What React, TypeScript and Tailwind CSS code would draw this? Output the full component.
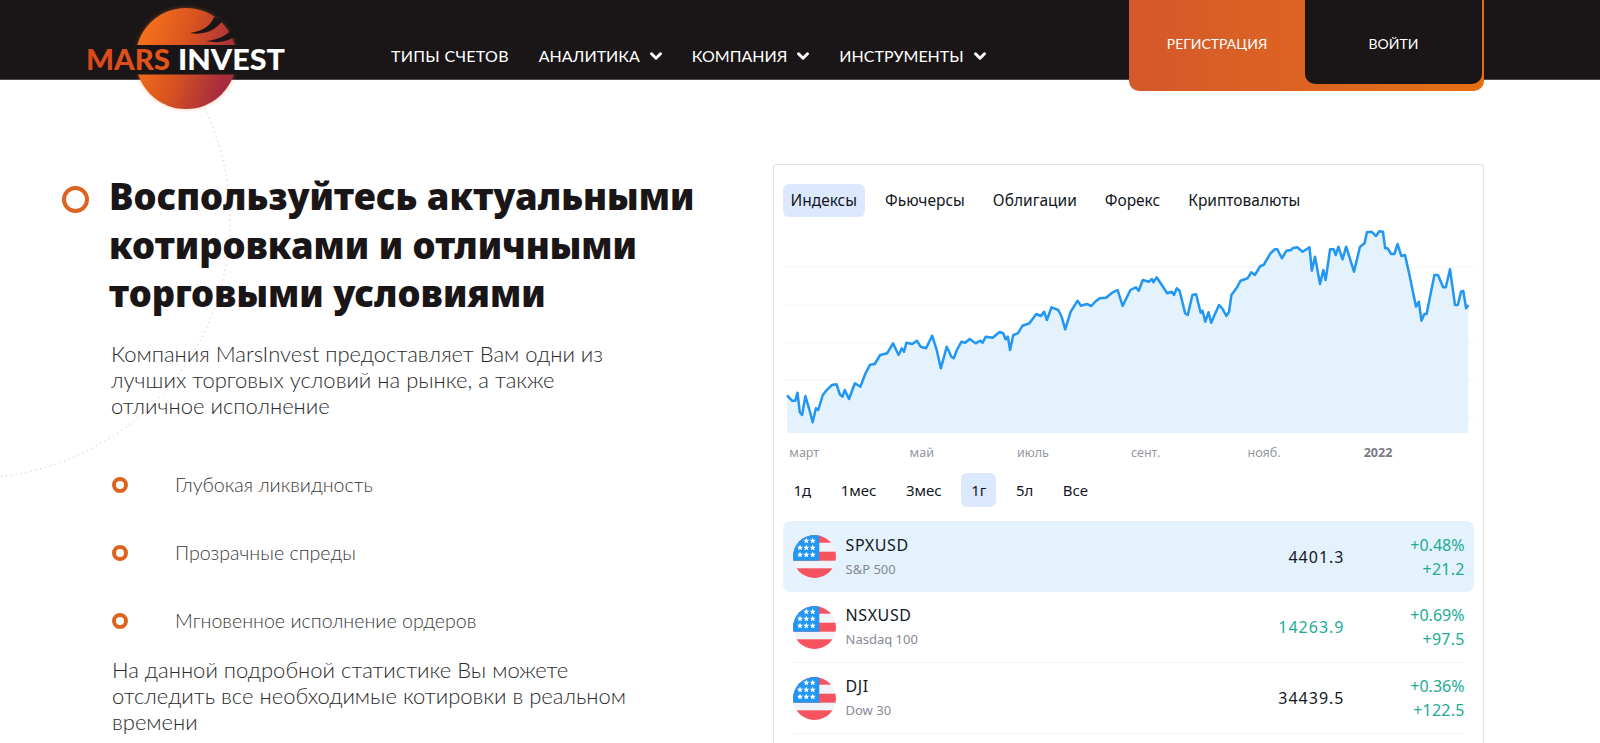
import { ChevronDown } from "lucide-react";

const navItems = [
  { label: "ТИПЫ СЧЕТОВ", arrow: false },
  { label: "АНАЛИТИКА", arrow: true },
  { label: "КОМПАНИЯ", arrow: true },
  { label: "ИНСТРУМЕНТЫ", arrow: true },
];

const tabs = ["Индексы", "Фьючерсы", "Облигации", "Форекс", "Криптовалюты"];
const ranges = ["1д", "1мес", "3мес", "1г", "5л", "Все"];
const bullets = ["Глубокая ликвидность", "Прозрачные спреды", "Мгновенное исполнение ордеров"];

const quotes = [
  { id: "spx", symbol: "SPXUSD", name: "S&P 500", price: "4401.3", up: false, pct: "+0.48%", diff: "+21.2" },
  { id: "nsx", symbol: "NSXUSD", name: "Nasdaq 100", price: "14263.9", up: true, pct: "+0.69%", diff: "+97.5" },
  { id: "dji", symbol: "DJI", name: "Dow 30", price: "34439.5", up: false, pct: "+0.36%", diff: "+122.5" },
];

const axisLabels = [
  { x: 6.3, text: "март" },
  { x: 126.6, text: "май" },
  { x: 234, text: "июль" },
  { x: 348, text: "сент." },
  { x: 464.5, text: "нояб." },
  { x: 580.7, text: "2022", bold: true },
];

// traced from the picture, x and y are in different scales, see toPath
const raw = [
  [37,706],[48,722],[55,722],[60,698],[65,757],[70,765],[77,708],[85,745],[93,787],[100,745],[105,750],[115,705],[125,688],[135,675],[145,673],[152,703],[158,710],[163,690],[172,717],[185,670],[197,680],[208,640],[218,614],[228,612],[240,585],[255,580],[268,550],[280,585],[287,565],[292,575],[297,548],[310,552],[320,542],[328,560],[340,565],[353,527],[363,570],[372,625],[385,560],[395,590],[400,595],[407,570],[417,545],[425,548],[435,537],[448,550],[458,542],[463,548],[470,530],[485,533],[500,516],[508,520],[513,538],[518,530],[523,570],[530,525],[540,520],[550,497],[565,490],[580,462],[590,468],[597,455],[603,480],[613,442],[628,450],[635,470],[643,508],[655,455],[670,422],[677,437],[690,432],[700,438],[708,425],[718,415],[732,413],[745,398],[757,390],[768,438],[785,390],[797,382],[803,392],[812,360],[825,365],[832,357],[835,367],[842,352],[850,368],[865,400],[875,395],[880,405],[886,385],[892,392],[904,460],[910,465],[920,405],[928,403],[938,458],[942,452],[948,485],[955,457],[961,488],[978,435],[985,445],[994,468],[1000,455],[1005,405],[1018,380],[1025,362],[1040,355],[1048,337],[1056,345],[1068,318],[1075,315],[1090,280],[1100,268],[1105,268],[1115,295],[1125,272],[1135,270],[1138,265],[1148,262],[1160,275],[1175,262],[1180,332],[1187,290],[1198,372],[1205,330],[1210,360],[1220,268],[1228,268],[1232,285],[1238,260],[1247,298],[1255,260],[1272,335],[1285,260],[1295,250],[1300,217],[1310,215],[1320,228],[1327,214],[1335,215],[1340,265],[1345,265],[1353,282],[1360,282],[1367,252],[1375,288],[1383,285],[1392,340],[1407,440],[1413,425],[1419,482],[1425,462],[1430,462],[1447,345],[1455,345],[1466,382],[1472,382],[1481,328],[1492,435],[1498,435],[1505,395],[1510,393],[1516,445],[1521,435],
];

const toX = (x: number) => x / 2.178 - 13;
const toPath = () => raw.map(([x, y]) => `${toX(x).toFixed(1)} ${(y / 3 - 57).toFixed(1)}`).join(" L");

const stars: [number, number][] = [
  [13.3, 5.7], [19.7, 5.7],
  [7, 12.7], [13.3, 12.7], [19.7, 12.7],
  [7, 19.7], [13.3, 19.7], [19.7, 19.7],
];

const Flag = () => (
  <svg width="43" height="43" viewBox="0 0 43 43" className="shrink-0">
    <defs>
      <clipPath id="flagClip">
        <circle cx="21.5" cy="21.5" r="21.5" />
      </clipPath>
    </defs>
    <g clipPath="url(#flagClip)">
      <rect width="43" height="43" fill="#f0f3fa" />
      <rect y="0" width="43" height="7.7" fill="#f7525f" />
      <rect y="16.7" width="43" height="9" fill="#f7525f" />
      <rect y="33.3" width="43" height="9.7" fill="#f7525f" />
      <rect width="26.3" height="25.7" fill="#2196f3" />
      {stars.map(([x, y]) => (
        <polygon
          key={`${x}-${y}`}
          transform={`translate(${x} ${y}) scale(1.2)`}
          points="0,-2.6 0.7,-0.8 2.5,-0.8 1.1,0.4 1.6,2.2 0,1.2 -1.6,2.2 -1.1,0.4 -2.5,-0.8 -0.7,-0.8"
          fill="#fff"
        />
      ))}
    </g>
  </svg>
);

const Logo = () => (
  <svg width="240" height="125" viewBox="0 0 240 125" className="absolute left-[70px] top-0">
    <defs>
      <linearGradient id="marsBall" x1="0" y1="0" x2="1" y2="0.35">
        <stop offset="0" stopColor="#ff7a1a" />
        <stop offset="0.55" stopColor="#d9541f" />
        <stop offset="1" stopColor="#a62c3e" />
      </linearGradient>
      <linearGradient id="marsWord" x1="0" y1="0" x2="1" y2="0">
        <stop offset="0" stopColor="#d9481c" />
        <stop offset="1" stopColor="#e2571a" />
      </linearGradient>
    </defs>
    <circle cx="116" cy="58.5" r="50.5" fill="url(#marsBall)" className="drop-shadow-[0_0_2px_rgba(255,120,40,0.4)]" />
    <path d="M120 33 C134 31 141 25 144 17 L153 20 C148 28 136 36 120 33Z" fill="#1a1617" />
    <path d="M136 41 C148 40 158 35 164 27 L170 33 C160 41 150 44 136 41Z" fill="#1a1617" />
    <rect x="50" y="45" width="140" height="29.5" fill="#1a1617" />
    <text x="16" y="70" fontFamily="Lato, sans-serif" fontWeight="900" fontSize="28" textLength="84" lengthAdjust="spacingAndGlyphs" fill="url(#marsWord)">
      MARS
    </text>
    <text x="108" y="70" fontFamily="Lato, sans-serif" fontWeight="900" fontSize="28" textLength="107" lengthAdjust="spacingAndGlyphs" fill="#fff">
      INVEST
    </text>
  </svg>
);

export default function App() {
  return (
    <div className="relative h-[743px] overflow-hidden bg-white font-['Lato',sans-serif] text-[#1a1617]">
      <header className="relative z-10 flex h-[80px] items-start border-b border-[#4a4a4a] bg-[#1a1617] pl-[391px] pr-[116px]">
        <Logo />
        <nav className="flex items-center gap-[30px] pt-[46px] text-[16px] leading-[20px] text-white">
          {navItems.map((item) => (
            <a key={item.label} className={item.arrow ? "flex items-center gap-[7px]" : "flex items-center tracking-[0.3px]"}>
              {item.label}
              {item.arrow && <ChevronDown size={18} strokeWidth={4} className="-mr-[3px]" />}
            </a>
          ))}
        </nav>
        <div className="ml-auto flex h-[91px] w-[355px] rounded-b-[10px] bg-gradient-to-r from-[#d4582b] to-[#e56f10] pb-[7px] pr-[2px] text-[14px] text-white">
          <a className="flex w-[176px] justify-center pt-[33px]">РЕГИСТРАЦИЯ</a>
          <a className="flex flex-1 justify-center rounded-b-[10px] bg-[#1a1617] pt-[33px]">ВОЙТИ</a>
        </div>
      </header>

      <svg width="300" height="500" className="absolute left-0 top-0">
        <circle cx="-28" cy="220" r="258" fill="none" stroke="#f4a585" strokeWidth="1" strokeDasharray="1 4" />
      </svg>

      <main className="relative flex items-start">
        <section className="w-[773px] pl-[62px] pt-[92px]">
          <div className="flex items-start gap-[20px]">
            <span className="mt-[14px] h-[27px] w-[27px] shrink-0 rounded-full border-[4px] border-[#dc6320]" />
            <h1 className="font-['Noto_Sans',sans-serif] text-[36.4px] font-black leading-[48.5px] text-[#1a1617]">
              Воспользуйтесь актуальными
              <br />
              котировками и отличными
              <br />
              торговыми условиями
            </h1>
          </div>
          <p className="ml-[49px] mt-[23px] w-[510px] text-[22px] font-light leading-[26px] text-[#2b2b2b]">
            Компания MarsInvest предоставляет Вам одни из лучших торговых условий на рынке, а также отличное исполнение
          </p>
          <ul className="ml-[50px] mt-[54.5px] flex flex-col gap-[44px]">
            {bullets.map((text) => (
              <li key={text} className="flex h-[24px] items-center text-[19.6px] font-light text-[#3a3a3a]">
                <span className="mr-[47px] h-[16px] w-[16px] shrink-0 rounded-full border-[4px] border-[#dc6320]" />
                {text}
              </li>
            ))}
          </ul>
          <p className="ml-[50px] mt-[24px] w-[530px] text-[22px] font-light leading-[26px] text-[#2b2b2b]">
            На данной подробной статистике Вы можете отследить все необходимые котировки в реальном времени
          </p>
        </section>

        <section className="mt-[84px] h-[700px] w-[711px] rounded-[3px] border border-[#e0e3eb] pl-[9px] pr-[9px] pt-[19px] font-['Noto_Sans',sans-serif] text-[#131722]">
          <div className="flex gap-[13px] text-[15.5px]">
            {tabs.map((tab, i) => (
              <span
                key={tab}
                className={
                  i === 0
                    ? "flex h-[33px] items-center rounded-[6px] bg-[#dbe8fd] px-[7.5px]"
                    : "flex h-[33px] items-center rounded-[6px] px-[7.5px]"
                }
              >
                {tab}
              </span>
            ))}
          </div>

          <svg width="691" height="256" className="block">
            {[50, 88, 126, 163, 200].map((y) => (
              <line key={y} x1="0" x2="691" y1={y} y2={y} stroke="#f3f5fa" />
            ))}
            <path d={`M${toPath()} L${toX(1521)} 216 L${toX(37)} 216 Z`} fill="#e3f2fd" />
            <path d={`M${toPath()}`} fill="none" stroke="#2196f3" strokeWidth="2.5" strokeLinejoin="round" />
            {axisLabels.map((l) => (
              <text
                key={l.text}
                x={l.x}
                y="240"
                fontSize="12.5"
                fontWeight={l.bold ? 700 : 400}
                fill={l.bold ? "#787b86" : "#9598a1"}
              >
                {l.text}
              </text>
            ))}
          </svg>

          <div className="ml-[0.5px] flex gap-[9.5px] text-[15px]">
            {ranges.map((r) => (
              <span
                key={r}
                className={
                  r === "1г"
                    ? "flex h-[33.5px] items-center rounded-[6px] bg-[#dbe8fd] px-[10px]"
                    : "flex h-[33.5px] items-center rounded-[6px] px-[10px]"
                }
              >
                {r}
              </span>
            ))}
          </div>

          <div className="mt-[14.5px] flex flex-col">
            {quotes.map((q, i) => (
              <div key={q.id} className={i === 0 ? "rounded-[8px] bg-[#e3f2fd] px-[9.5px]" : "px-[9.5px]"}>
                <div className={i === 0 ? "flex h-[71px] items-center" : "flex h-[71px] items-center border-b border-[#f0f3fa]"}>
                  <Flag />
                  <div className="ml-[10px] flex flex-col gap-[3px] pt-[1px]">
                    <span className="text-[16px] leading-[21px] tracking-[0.6px]">{q.symbol}</span>
                    <span className="text-[13px] leading-[21px] text-[#868993]">{q.name}</span>
                  </div>
                  <span className={q.up ? "ml-auto text-[16px] tracking-[1px] text-[#22ab94]" : "ml-auto text-[16px] tracking-[1px]"}>
                    {q.price}
                  </span>
                  <div className="flex w-[120px] flex-col gap-[3px] pt-[1px] text-right text-[16px] leading-[21px] text-[#22ab94]">
                    <span>{q.pct}</span>
                    <span className="tracking-[0.2px]">{q.diff}</span>
                  </div>
                </div>
              </div>
            ))}
          </div>
        </section>
      </main>
    </div>
  );
}
